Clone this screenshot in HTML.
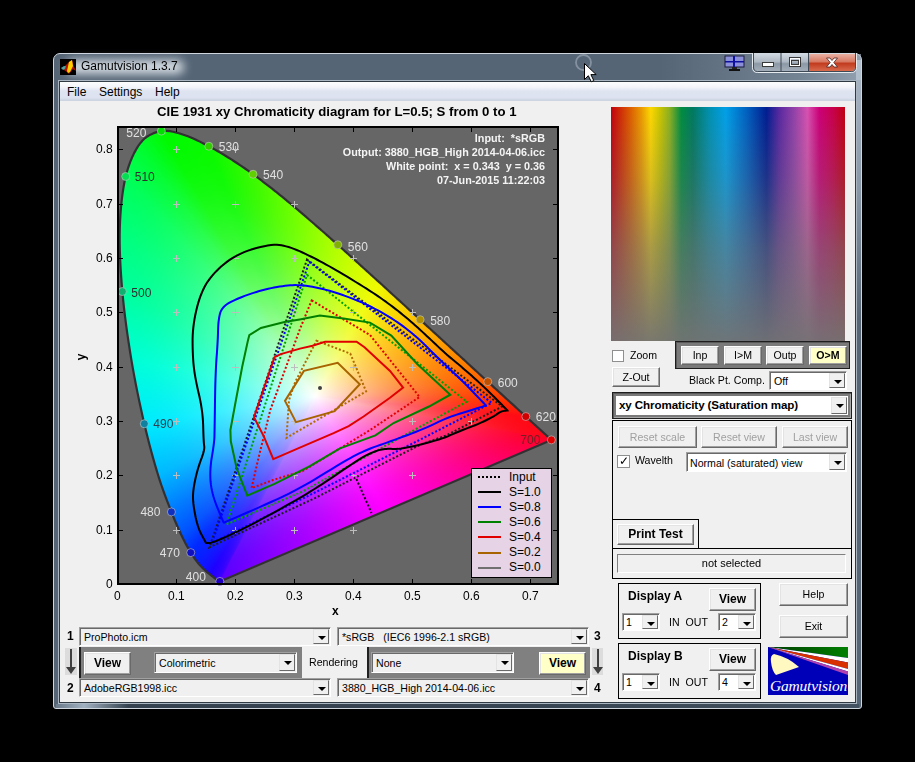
<!DOCTYPE html>
<html><head><meta charset="utf-8">
<style>
*{box-sizing:border-box}
body{margin:0;width:915px;height:762px;background:#000;position:relative;overflow:hidden;font-family:"Liberation Sans",sans-serif;}
.a{position:absolute}
#frame{left:53px;top:53px;width:809px;height:656px;background:#556576;border:1px solid #cfd6de;border-radius:7px 7px 3px 3px;}
#client{left:58px;top:80px;width:799px;height:624px;border:1px solid #a9b5c1;}
#client2{left:59px;top:81px;width:797px;height:622px;border:1px solid #2f3942;background:#f0f0f0;}
#menu{left:60px;top:82px;width:795px;height:19px;background:linear-gradient(#fdfdfe 0px,#f3f5fa 5px,#dfe4f1 9px,#dce2f0 16px,#cdd4e2 18px);}
.mi{top:85px;font-size:12px;color:#000}
.t11{font-size:10.6px}
.btn{background:#f0f0f0;border:1px solid;border-color:#fff #696969 #696969 #fff;box-shadow:inset -1px -1px 0 #a0a0a0, inset 1px 1px 0 #e3e3e3;font-size:10.6px;text-align:center;color:#000}
.dd{background:#fff;border:1px solid;border-color:#a0a0a0 #fff #fff #a0a0a0;box-shadow:inset 1px 1px 0 #696969;font-size:10.6px;}
.dda{position:absolute;right:1px;top:1px;bottom:1px;width:16px;background:#f0f0f0;border:1px solid;border-color:#e3e3e3 #696969 #696969 #e3e3e3;}
.dda:after{content:"";position:absolute;left:4px;top:6px;border-left:4px solid transparent;border-right:4px solid transparent;border-top:4px solid #000}
.lbl{font-size:12px;color:#000;white-space:nowrap}
</style></head><body>
<div id="frame" class="a"></div>
<div class="a" style="left:660px;top:54px;width:201px;height:26px;background:linear-gradient(to right,rgba(175,190,205,0) 0%,rgba(175,190,205,0.35) 70%,rgba(185,198,212,0.6) 100%)"></div>
<div class="a" style="left:856px;top:60px;width:5px;height:260px;background:linear-gradient(rgba(185,198,212,0.85) 0%,rgba(170,185,200,0.6) 50%,rgba(85,101,118,0) 100%)"></div>
<div class="a" style="left:56px;top:704px;width:803px;height:4px;background:linear-gradient(to right,rgba(120,136,152,0.6) 0%,rgba(175,190,205,0.85) 3.5%,rgba(48,60,72,0.85) 9%,rgba(48,60,72,0.8) 60%,rgba(60,74,88,0.7) 100%)"></div>
<div id="client" class="a"></div>
<div id="client2" class="a"></div>
<div id="menu" class="a"></div>
<div class="a mi" style="left:67px">File</div>
<div class="a mi" style="left:99px">Settings</div>
<div class="a mi" style="left:155px">Help</div>

<svg class="a" style="left:0;top:0" width="915" height="762">
<defs><linearGradient id="fbg" x1="0" y1="0" x2="0.4" y2="1"><stop offset="0" stop-color="#00f000"/><stop offset="0.45" stop-color="#a0ffc0"/><stop offset="0.7" stop-color="#f0c0f0"/><stop offset="1" stop-color="#8000ff"/></linearGradient></defs>
<rect x="118" y="127" width="440" height="457" fill="#666"/>
<polygon points="219.8,581.4 219.4,581.4 218.7,581.2 218.1,580.8 217.2,580.3 216.1,579.3 214.6,578.1 212.6,576.5 210.0,574.4 206.7,571.7 202.5,567.9 197.5,562.3 190.8,552.6 182.2,536.9 171.4,511.9 158.1,475.0 144.3,423.8 131.4,359.8 122.3,291.5 119.8,228.3 125.7,176.5 140.5,142.9 161.4,131.1 184.9,135.2 208.9,146.2 231.4,159.4 253.1,174.3 274.5,190.6 295.6,207.9 316.7,226.1 337.8,244.8 358.8,263.7 379.7,282.7 400.2,301.4 420.1,319.7 439.2,337.2 457.2,353.6 473.5,368.6 487.7,381.7 500.3,393.1 510.7,402.6 519.1,410.3 525.8,416.5 531.2,421.4 535.5,425.4 539.1,428.7 542.1,431.4 546.2,435.2 548.6,437.3 550.6,439.2 551.3,439.9" fill="url(#fbg)" stroke="#333" stroke-width="2"/>
<rect x="118" y="127" width="440" height="457" fill="none" stroke="#000" stroke-width="2"/>
</svg>
<canvas id="cv" class="a" width="915" height="762" style="left:0;top:0"></canvas>
<script>
(function(){
var cv=document.getElementById('cv'),c=cv.getContext('2d');
var W=915,H=762,SATP=1.8;
function X(x){return 117.5+x*590.5;}
function Y(y){return 584-y*543.2;}
var L=[[380,.1741,.0050],[400,.1733,.0048],[410,.1726,.0048],[420,.1714,.0051],[425,.1703,.0058],[430,.1689,.0069],[435,.1669,.0086],[440,.1644,.0109],[445,.1611,.0138],[450,.1566,.0177],[455,.1510,.0227],[460,.1440,.0297],[465,.1355,.0399],[470,.1241,.0578],[475,.1096,.0868],[480,.0913,.1327],[485,.0687,.2007],[490,.0454,.2950],[495,.0235,.4127],[500,.0082,.5384],[505,.0039,.6548],[510,.0139,.7502],[515,.0389,.8120],[520,.0743,.8338],[525,.1142,.8262],[530,.1547,.8059],[535,.1929,.7816],[540,.2296,.7543],[545,.2658,.7243],[550,.3016,.6923],[555,.3373,.6589],[560,.3731,.6245],[565,.4087,.5896],[570,.4441,.5547],[575,.4788,.5202],[580,.5125,.4866],[585,.5448,.4544],[590,.5752,.4242],[595,.6029,.3965],[600,.6270,.3725],[605,.6482,.3514],[610,.6658,.3340],[615,.6801,.3197],[620,.6915,.3083],[625,.7006,.2993],[630,.7079,.2920],[635,.7140,.2859],[640,.7191,.2809],[650,.7260,.2740],[660,.7300,.2700],[680,.7334,.2666],[700,.7347,.2653]];
window._L=L;
var SP=[];(function(){var P=[];for(var i=1;i<L.length;i++)P.push([X(L[i][1]),Y(L[i][2])]);
 for(var i=0;i<P.length-1;i++){var p0=P[Math.max(0,i-1)],p1=P[i],p2=P[i+1],p3=P[Math.min(P.length-1,i+2)];
  for(var s=0;s<8;s++){var t=s/8,t2=t*t,t3=t2*t;
   SP.push([0.5*((2*p1[0])+(-p0[0]+p2[0])*t+(2*p0[0]-5*p1[0]+4*p2[0]-p3[0])*t2+(-p0[0]+3*p1[0]-3*p2[0]+p3[0])*t3),
            0.5*((2*p1[1])+(-p0[1]+p2[1])*t+(2*p0[1]-5*p1[1]+4*p2[1]-p3[1])*t2+(-p0[1]+3*p1[1]-3*p2[1]+p3[1])*t3)]);}}
 SP.push(P[P.length-1]);})();
function locPath(){c.beginPath();for(var i=0;i<SP.length;i++){if(i==0)c.moveTo(SP[i][0],SP[i][1]);else c.lineTo(SP[i][0],SP[i][1]);}c.closePath();}
c.fillStyle='#666666';c.fillRect(118,127,440,457);
// clip path
c.save();
locPath();
c.clip();
function g(v){v=v<=0.0031308?12.92*v:1.055*Math.pow(v,1/2.4)-0.055;return Math.max(0,Math.min(255,Math.round(v*255)));}
var tmp=document.createElement('canvas');tmp.width=W;tmp.height=H;var tc=tmp.getContext('2d');var ti=tc.createImageData(W,H),td=ti.data;
var KC={400:[90,0,255],450:[30,0,255],470:[0,40,255],480:[0,120,255],485:[0,185,255],490:[0,235,255],495:[0,255,215],500:[0,255,160],510:[0,255,90],520:[0,250,0],530:[10,250,0],540:[60,250,0],550:[115,255,0],560:[180,255,0],570:[240,250,0],580:[255,190,0],590:[255,140,0],600:[255,95,0],610:[255,45,0],620:[255,10,20],700:[255,0,40]};
var KW=[400,450,470,480,485,490,495,500,510,520,530,540,550,560,570,580,590,600,610,620,700];
function lc(wl){if(wl<=400)return KC[400];for(var i=0;i<KW.length-1;i++){if(wl<=KW[i+1]){var a=KW[i],b=KW[i+1],t=(wl-a)/(b-a),A=KC[a],B=KC[b];return [A[0]+(B[0]-A[0])*t,A[1]+(B[1]-A[1])*t,A[2]+(B[2]-A[2])*t];}}return KC[700];}
// boundary vertices with colors
var BV=[];
for(var i=1;i<L.length;i++){BV.push([L[i][1],L[i][2],lc(L[i][0])]);}
var PK=[[0,[255,0,40]],[0.25,[255,0,150]],[0.5,[255,0,255]],[0.75,[165,0,255]],[1,[90,0,255]]];
var p7=L[L.length-1],p4=L[1];
for(var j=1;j<20;j++){var t=j/20;var col;for(var k=0;k<PK.length-1;k++){if(t<=PK[k+1][0]){var u=(t-PK[k][0])/(PK[k+1][0]-PK[k][0]);col=[0,1,2].map(function(q){return PK[k][1][q]+(PK[k+1][1][q]-PK[k][1][q])*u;});break;}}
 BV.push([p7[1]+(p4[1]-p7[1])*t,p7[2]+(p4[2]-p7[2])*t,col]);}
var WX=0.335,WY=0.345,NA=2880,RA=new Float32Array(NA),CA=[];
// for each angle find intersection
for(var a=0;a<NA;a++){var th=a/NA*2*Math.PI,dx=Math.cos(th),dy=Math.sin(th);RA[a]=0;CA[a]=[255,255,255];
 for(var i=0;i<BV.length;i++){var P=BV[i],Q=BV[(i+1)%BV.length];
  var ex=Q[0]-P[0],ey=Q[1]-P[1],fx=P[0]-WX,fy=P[1]-WY;var den=dx*ey-dy*ex;if(Math.abs(den)<1e-12)continue;
  var r=(fx*ey-fy*ex)/den,s=(fx*dy-fy*dx)/den;if(r>0&&s>=0&&s<=1){RA[a]=r;CA[a]=[0,1,2].map(function(q){return P[2][q]+(Q[2][q]-P[2][q])*s;});break;}}}
for(var py=127;py<585;py++){for(var px=117;px<559;px++){
 var x=(px+0.5-117.5)/590.5,y=(584-(py+0.5))/543.2;
 var dx=x-WX,dy=y-WY,rr=Math.sqrt(dx*dx+dy*dy),th=Math.atan2(dy,dx);if(th<0)th+=2*Math.PI;
 var ai=Math.floor(th/(2*Math.PI)*NA)%NA;var R=RA[ai]||1;var sat=Math.min(1,rr/R);sat=1-Math.pow(1-sat,SATP);
 var C=CA[ai];
 var k=(py*W+px)*4;td[k]=255+(C[0]-255)*sat;td[k+1]=255+(C[1]-255)*sat;td[k+2]=255+(C[2]-255)*sat;td[k+3]=255;
}}
tc.putImageData(ti,0,0);
c.drawImage(tmp,0,0);
c.restore();
// locus outline
c.strokeStyle='#333033';c.lineWidth=2.2;c.lineJoin='round';
locPath();c.stroke();
// grid plus marks
var G=[[1,8],[2,8],[1,7],[2,7],[3,7],[1,6],[2,6],[3,6],[4,6],[1,5],[2,5],[3,5],[4,5],[5,5],[1,4],[2,4],[3,4],[4,4],[5,4],[1,3],[2,3],[3,3],[4,3],[5,3],[6,3],[1,2],[2,2],[3,2],[4,2],[5,2],[1,1],[2,1],[3,1],[4,1]];
c.strokeStyle='#bdbdbd';c.lineWidth=1;
G.forEach(function(q){var px=Math.floor(X(q[0]/10))+0.5,py=Math.round(Y(q[1]/10))+0.5;c.beginPath();c.moveTo(px-3.5,py);c.lineTo(px+3.5,py);c.moveTo(px,py-3.5);c.lineTo(px,py+3.5);c.stroke();});
function spl(P){for(var it=0;it<3;it++){var R=[],n=P.length;for(var i=0;i<n;i++){var a=P[i],b=P[(i+1)%n];
 if(a[0]==b[0]&&a[1]==b[1]){R.push(a);continue;}
 R.push([0.75*a[0]+0.25*b[0],0.75*a[1]+0.25*b[1]]);R.push([0.25*a[0]+0.75*b[0],0.25*a[1]+0.75*b[1]]);}P=R;}return P;}
function pl(pts,col,dot,close){c.beginPath();c.strokeStyle=col;c.lineWidth=2;c.lineJoin='miter';
 if(dot)c.setLineDash([2,2]);else c.setLineDash([]);
 for(var i=0;i<pts.length;i++){if(i==0)c.moveTo(pts[i][0],pts[i][1]);else c.lineTo(pts[i][0],pts[i][1]);}
 if(close)c.closePath();c.stroke();}
// dotted input triangles
pl([[307,259.5],[502.3,406.5],[446.3,435.4],[420,444.9],[387.2,461.4],[315,498.1],[209.4,547.3],[238.3,462.6]],'#202020',1,1);
pl([[356.4,479],[371.5,513]],'#101010',1,0);
pl([[309.3,261.9],[491.7,402.9],[420,439.7],[305.2,497.4],[212.1,542.7]],'#0000ff',1,1);
pl([[307,274.9],[466.9,401.7],[418,427.9],[302.6,491.5],[226.5,524.3]],'#00a000',1,1);
pl([[311.7,300.4],[370,335],[419.6,397],[370,430.1],[302.6,471.1],[273.8,479.7],[251.5,488.2],[258,460],[270.3,410],[300,328.9]],'#e00000',1,1);
pl([[316.5,340.7],[350.3,353.6],[366.1,391.4],[286.5,437.9],[289,400],[295.2,382]],'#b06a00',1,1);
// solid output
pl(spl([[206,542.9],[206,542.9],[206,542.9],[213.1,542.9],[250.9,525.2],[298.1,499.2],[326.5,481.5],[358.9,459.1],[375.4,450.8],[387.2,448.4],[399.1,449.6],[439.4,440],[459.8,431],[478.7,424],[494.5,416],[500.8,411.3],[507.5,410.5],[507.5,410.5],[507.5,410.5],[488.2,390.9],[467.7,372],[445.7,353.9],[428.3,337.3],[409.4,320],[388.9,303.7],[370,290.7],[336.5,270.2],[312.8,257.2],[289.2,246.5],[271.5,243.7],[237.2,253.6],[213.6,272.5],[200.6,292.6],[192.6,325.7],[192.6,355.7],[195,377.7],[202.8,410.8],[203.6,442.5],[204.8,449.6],[197.7,468.5],[193,489.8],[193,503.9],[197.7,527.6]]),'#000000',0,1);
pl(spl([[223.7,522.8],[223.7,522.8],[223.7,522.8],[250.9,511],[298.1,489.8],[340,463.8],[363.6,450.8],[387.2,442.5],[422.7,429.5],[447.2,417.6],[467.7,411.3],[486,405.5],[486,405.5],[486,405.5],[463,381.4],[441,361],[415.7,335.7],[393.6,319.1],[370,306],[355.4,299.7],[331.7,290.9],[303.4,284.8],[284.5,285.5],[260.9,290.2],[237.2,298.5],[221.9,306.8],[218.3,319.8],[217.8,341.5],[215.4,373],[214.6,430],[214.3,442.5],[209.5,470.9],[211.9,494.5]]),'#0000ff',0,1);
pl([[247.3,495.7],[274.5,483.9],[309.9,466.1],[340,448.4],[375.4,435.4],[393.6,423],[429,406.5],[450.3,394.7],[417.2,364],[391.3,335.6],[370,322.6],[343.6,318.6],[319.9,315.5],[299.7,319.4],[284.5,322.1],[260.9,328],[249.3,335.2],[247.7,341.5],[242.2,366.7],[235.1,404.5],[230.4,430],[230.8,441.3],[236.7,468.5]],'#008000',0,1);
pl([[273.3,459.1],[298.1,448.4],[333.6,433.1],[348.7,426.1],[363.6,416.5],[390,397.7],[403.1,387.6],[390,370.9],[364.5,347.3],[356.6,341.8],[325.1,341.8],[312.5,345.7],[300,348.6],[280.8,354.1],[274.5,357.2],[254,417.1],[263.9,436.6]],'#e00000',0,1);
pl([[285,400.9],[303.9,370.9],[337.7,362.8],[359.8,384.3],[334.6,411.1],[296,422.1]],'#a86400',0,1);
c.setLineDash([]);
// white point
c.fillStyle='#404040';c.beginPath();c.arc(320,388,2,0,7);c.fill();
// wavelength markers
var M=[[520,'#00e000','#e0e0e0',-35,6],[530,'#30d000','#e0e0e0',10,5],[540,'#60d000','#e0e0e0',10,5],[560,'#80b000','#e0e0e0',10,6],[580,'#b09000','#e0e0e0',10,5],[600,'#c05000','#e0e0e0',10,5],[620,'#d00000','#e0e0e0',10,4],[700,'#e00000','#702020',-31,4],[510,'#00e050','#303030',9,5],[500,'#10b070','#303030',9,5],[490,'#1080a0','#304050',9,4],[480,'#1030c0','#e0e0e0',-31,4],[470,'#1010c0','#e0e0e0',-31,4],[400,'#2000c0','#e0e0e0',-34,0]];
c.font='12px "Liberation Sans"';c.textBaseline='alphabetic';
M.forEach(function(m){var p=null;L.forEach(function(q){if(q[0]==m[0])p=q;});var px=X(p[1]),py=Y(p[2]);
 c.beginPath();c.arc(px,py,4,0,7);c.fillStyle=m[1];c.fill();c.strokeStyle='rgba(200,200,200,0.6)';c.lineWidth=1;c.stroke();
 c.fillStyle=m[2];c.fillText(String(m[0]),px+m[3],py+m[4]);});
// axes box
c.strokeStyle='#000';c.lineWidth=2;c.strokeRect(118,127,440,457);
c.lineWidth=1;c.beginPath();
for(var i=1;i<=7;i++){var px=Math.floor(X(i/10))+0.5;c.moveTo(px,584);c.lineTo(px,579);c.moveTo(px,127);c.lineTo(px,132);}
for(var i=1;i<=8;i++){var py=Math.round(Y(i/10))+0.5;c.moveTo(118,py);c.lineTo(123,py);c.moveTo(558,py);c.lineTo(553,py);}
c.stroke();
})();
</script>

<div class="a" style="left:157px;top:104px;font-size:13.2px;font-weight:bold;white-space:nowrap">CIE 1931 xy Chromaticity diagram for L=0.5; S from 0 to 1</div>
<div class="a lbl" style="left:96px;top:142px">0.8</div>
<div class="a lbl" style="left:96px;top:197px">0.7</div>
<div class="a lbl" style="left:96px;top:251px">0.6</div>
<div class="a lbl" style="left:96px;top:305px">0.5</div>
<div class="a lbl" style="left:96px;top:360px">0.4</div>
<div class="a lbl" style="left:96px;top:414px">0.3</div>
<div class="a lbl" style="left:96px;top:468px">0.2</div>
<div class="a lbl" style="left:96px;top:523px">0.1</div>
<div class="a lbl" style="left:106px;top:577px">0</div>
<div class="a lbl" style="left:114px;top:589px">0</div>
<div class="a lbl" style="left:168px;top:589px">0.1</div>
<div class="a lbl" style="left:227px;top:589px">0.2</div>
<div class="a lbl" style="left:286px;top:589px">0.3</div>
<div class="a lbl" style="left:345px;top:589px">0.4</div>
<div class="a lbl" style="left:404px;top:589px">0.5</div>
<div class="a lbl" style="left:463px;top:589px">0.6</div>
<div class="a lbl" style="left:522px;top:589px">0.7</div>
<div class="a lbl" style="left:332px;top:604px;font-weight:bold">x</div>
<div class="a lbl" style="left:78px;top:350px;font-weight:bold;transform:rotate(-90deg)">y</div>
<div class="a" style="right:370px;top:131px;font-size:10.8px;font-weight:bold;color:#f4f4f4;text-align:right;line-height:14px;white-space:nowrap">Input:&nbsp; *sRGB<br>Output: 3880_HGB_High 2014-04-06.icc<br>White point:&nbsp; x = 0.343&nbsp; y = 0.36<br>07-Jun-2015 11:22:03</div>
<div class="a" style="left:471px;top:468px;width:81px;height:110px;background:#e6d4e6;border:1px solid #000"></div>
<svg class="a" style="left:471px;top:468px" width="81" height="110">
<line x1="7" y1="9" x2="30" y2="9" stroke="#000" stroke-width="2" stroke-dasharray="2 2"/>
<line x1="7" y1="24" x2="30" y2="24" stroke="#000" stroke-width="2"/>
<line x1="7" y1="39" x2="30" y2="39" stroke="#0000ff" stroke-width="2"/>
<line x1="7" y1="54" x2="30" y2="54" stroke="#008000" stroke-width="2"/>
<line x1="7" y1="69" x2="30" y2="69" stroke="#e00000" stroke-width="2"/>
<line x1="7" y1="85" x2="30" y2="85" stroke="#a86400" stroke-width="2"/>
<line x1="7" y1="100" x2="30" y2="100" stroke="#707070" stroke-width="2"/>
</svg>
<div class="a lbl" style="left:509px;top:470px;line-height:15px">Input<br>S=1.0<br>S=0.8<br>S=0.6<br>S=0.4<br>S=0.2<br>S=0.0</div>

<!-- title bar -->
<div class="a" style="left:66px;top:60px;width:118px;height:14px;border-radius:7px;background:rgba(225,231,237,0.92);filter:blur(5px)"></div>
<svg class="a" style="left:60px;top:59px" width="16" height="16" viewBox="0 0 16 16">
<rect width="16" height="16" fill="#000"/>
<path d="M1 9 L5 7 L9 3 L12 1 L14 8 L16 12 L13 10 L9 15 L7 13 L4 11 Z" fill="#b01000"/>
<path d="M9 3 L12 1 L13 7 L10 13 L8 14 L7 12 Z" fill="#ffd000"/>
<path d="M1 9 L4 7 L6 7 L5 10 L3 11 Z" fill="#30a0a0"/>
<path d="M2 9 L4 8 L5 9 L3 10 Z" fill="#909090"/>
</svg>
<div class="a" style="left:81px;top:59px;font-size:12px;color:#000;white-space:nowrap">Gamutvision 1.3.7</div>
<svg class="a" style="left:724px;top:55px" width="21" height="17" viewBox="0 0 21 17">
<rect x="1" y="1" width="19" height="11" fill="#8a8fd8" stroke="#1a1a40" stroke-width="1"/>
<rect x="9" y="1" width="2" height="11" fill="#1010a0"/>
<rect x="1" y="6" width="19" height="1.5" fill="#1010a0"/>
<rect x="8" y="12" width="5" height="2" fill="#222"/>
<rect x="5" y="14" width="11" height="2" fill="#111"/>
</svg>
<svg class="a" style="left:752px;top:53px" width="105" height="20" viewBox="0 0 105 20">
<defs>
<linearGradient id="gb" x1="0" y1="0" x2="0" y2="1"><stop offset="0" stop-color="#d4dbe3"/><stop offset="0.45" stop-color="#aeb8c3"/><stop offset="0.55" stop-color="#8c98a5"/><stop offset="1" stop-color="#a7b2bd"/></linearGradient>
<linearGradient id="gr" x1="0" y1="0" x2="0" y2="1"><stop offset="0" stop-color="#eab0a2"/><stop offset="0.45" stop-color="#d77a63"/><stop offset="0.55" stop-color="#c23b1f"/><stop offset="1" stop-color="#d86a4c"/></linearGradient>
</defs>
<path d="M0.5 0 V14.5 Q0.5 19.5 5.5 19.5 H99.5 Q104.5 19.5 104.5 14.5 V0" fill="url(#gb)" stroke="#e6ebf0" stroke-width="1"/>
<path d="M1.5 0 V14 Q1.5 18.5 5.5 18.5 H99.5 Q103.5 18.5 103.5 14 V0" fill="none" stroke="#3d4955" stroke-width="1"/>
<path d="M57 1 H103 V14 Q103 18 99 18 H57 Z" fill="url(#gr)"/>
<line x1="29" y1="0" x2="29" y2="19" stroke="#3d4955"/>
<line x1="56.5" y1="0" x2="56.5" y2="19" stroke="#3d4955"/>
<rect x="10.5" y="9.5" width="11" height="4" fill="#fff" stroke="#3a3a3a"/>
<rect x="37.5" y="4.5" width="11" height="9" fill="none" stroke="#3a3a3a" stroke-width="1"/>
<rect x="38.5" y="5.5" width="9" height="7" fill="none" stroke="#fff" stroke-width="1"/>
<rect x="39.5" y="7.5" width="7" height="4" fill="none" stroke="#3a3a3a" stroke-width="1"/>
<path d="M74.5 5 L78 5 L80 7.5 L82 5 L85.5 5 L81.8 9.5 L85.5 14 L82 14 L80 11.5 L78 14 L74.5 14 L78.2 9.5 Z" fill="#fff" stroke="#4a2020" stroke-width="0.8"/>
</svg>
<svg class="a" style="left:573px;top:52px" width="30" height="32" viewBox="0 0 30 32">
<circle cx="10.5" cy="10.5" r="7.5" fill="none" stroke="#8d9aa8" stroke-width="1.8" opacity="0.85"/>
<path d="M11.5 11.5 L11.5 27.5 L15.3 23.7 L18.3 29.8 L20.8 28.6 L17.9 22.6 L23.2 22.6 Z" fill="#fff" stroke="#000" stroke-width="1" stroke-linejoin="miter"/>
</svg>
<!-- right panel -->
<div id="spec" class="a" style="left:611px;top:107px;width:234px;height:234px;background:linear-gradient(to right,#c00010 0%,#cc2008 3%,#dc5a00 8%,#eb9a00 13%,#ffd800 17%,#c8c400 21%,#8cb020 25%,#008c40 30%,#007860 35%,#0090b0 42%,#00a0e8 49%,#0060c0 58%,#001c90 66.5%,#5a28a0 72%,#9040a8 78%,#d850b0 84%,#cc0078 89%,#c8004a 95%,#c00010 100%)"></div>
<div class="a" style="left:611px;top:107px;width:234px;height:234px;background:linear-gradient(rgba(115,115,115,0) 0%,rgba(115,115,115,0.25) 30%,rgba(115,115,115,0.6) 60%,rgba(115,115,115,0.95) 100%)"></div>
<div class="a" style="left:612px;top:350px;width:12px;height:12px;background:#fff;border:1px solid #8e8f8f"></div>
<div class="a t11" style="left:630px;top:349px">Zoom</div>
<div class="a btn" style="left:612px;top:367px;width:48px;height:20px;line-height:18px">Z-Out</div>
<div class="a" style="left:675px;top:341px;width:175px;height:28px;background:#7a7a7a;border:1px solid #1e1e1e;box-shadow:inset 1px 1px 0 #5a5a5a"></div>
<div class="a btn" style="left:681px;top:346px;width:38px;height:19px;line-height:17px">Inp</div>
<div class="a btn" style="left:724px;top:346px;width:38px;height:19px;line-height:17px">I&gt;M</div>
<div class="a btn" style="left:766px;top:346px;width:38px;height:19px;line-height:17px">Outp</div>
<div class="a btn" style="left:809px;top:346px;width:38px;height:19px;line-height:17px;background:#ffffc8;font-weight:bold">O&gt;M</div>
<div class="a t11" style="left:689px;top:374px">Black Pt. Comp.</div>
<div class="a dd" style="left:769px;top:371px;width:78px;height:19px;padding:2px 4px;line-height:14px">Off<div class="dda"></div></div>
<div class="a" style="left:612px;top:392px;width:240px;height:27px;background:#7a7a7a;border:1px solid #1e1e1e;box-shadow:inset 1px 1px 0 #5a5a5a,inset -1px -1px 0 #a8a8a8"></div>
<div class="a dd" style="left:616px;top:396px;width:232px;height:19px;padding:2px 3px;line-height:14px;font-weight:bold;font-size:11.6px;border:none;box-shadow:none;letter-spacing:-0.1px">xy Chromaticity (Saturation map)<div class="dda"></div></div>
<div class="a" style="left:612px;top:420px;width:240px;height:159px;border:1px solid #000"></div>
<div class="a btn" style="left:618px;top:426px;width:79px;height:22px;line-height:20px;color:#a0a0a0">Reset scale</div>
<div class="a btn" style="left:701px;top:426px;width:76px;height:22px;line-height:20px;color:#a0a0a0">Reset view</div>
<div class="a btn" style="left:782px;top:426px;width:66px;height:22px;line-height:20px;color:#a0a0a0">Last view</div>
<div class="a" style="left:617px;top:455px;width:13px;height:13px;background:#fff;border:1px solid #8e8f8f;font-size:12px;line-height:11px;text-align:center">&#10003;</div>
<div class="a t11" style="left:635px;top:454px">Wavelth</div>
<div class="a dd" style="left:686px;top:452px;width:161px;height:20px;padding:3px 3px;line-height:14px">Normal (saturated) view<div class="dda"></div></div>
<div class="a" style="left:612px;top:519px;width:87px;height:30px;border:1px solid #000;border-bottom:none"></div>
<div class="a" style="left:612px;top:548px;width:240px;height:1px;background:#000"></div>
<div class="a btn" style="left:617px;top:524px;width:77px;height:21px;line-height:19px;font-weight:bold;font-size:12px">Print Test</div>
<div class="a" style="left:617px;top:554px;width:229px;height:19px;border:1px solid;border-color:#808080 #fff #fff #808080;font-size:11px;text-align:center;line-height:17px">not selected</div>
<div class="a" style="left:618px;top:583px;width:143px;height:56px;border:1px solid #000"></div>
<div class="a" style="left:628px;top:589px;font-size:12px;font-weight:bold">Display A</div>
<div class="a btn" style="left:709px;top:588px;width:47px;height:23px;line-height:21px;font-weight:bold;font-size:12px">View</div>
<div class="a dd" style="left:622px;top:613px;width:38px;height:18px;padding:2px 3px;line-height:13px">1<div class="dda"></div></div>
<div class="a t11" style="left:669px;top:616px;word-spacing:3px">IN OUT</div>
<div class="a dd" style="left:718px;top:613px;width:38px;height:18px;padding:2px 3px;line-height:13px">2<div class="dda"></div></div>
<div class="a" style="left:618px;top:643px;width:143px;height:56px;border:1px solid #000"></div>
<div class="a" style="left:628px;top:649px;font-size:12px;font-weight:bold">Display B</div>
<div class="a btn" style="left:709px;top:648px;width:47px;height:23px;line-height:21px;font-weight:bold;font-size:12px">View</div>
<div class="a dd" style="left:622px;top:673px;width:38px;height:18px;padding:2px 3px;line-height:13px">1<div class="dda"></div></div>
<div class="a t11" style="left:669px;top:676px;word-spacing:3px">IN OUT</div>
<div class="a dd" style="left:718px;top:673px;width:38px;height:18px;padding:2px 3px;line-height:13px">4<div class="dda"></div></div>
<div class="a btn" style="left:779px;top:583px;width:69px;height:23px;line-height:21px">Help</div>
<div class="a btn" style="left:779px;top:615px;width:69px;height:23px;line-height:21px">Exit</div>
<svg class="a" style="left:768px;top:647px" width="80" height="48" viewBox="0 0 80 48">
<defs><linearGradient id="lg" x1="0" y1="0" x2="1" y2="0"><stop offset="0" stop-color="#003c00"/><stop offset="1" stop-color="#008000"/></linearGradient></defs>
<rect width="80" height="48" fill="#0000b8"/>
<path d="M0 0 L80 0 L80 11 Z" fill="url(#lg)"/>
<path d="M0 0 L80 11 L80 15.5 Z" fill="#fff"/>
<path d="M0 0 L80 15.5 L80 22 Z" fill="#d83000"/>
<path d="M0 0 L80 22 L80 24.5 Z" fill="#fff"/>
<path d="M0 0 L80 24.5 L80 28 Z" fill="#b040b0"/>
<path d="M6 7 Q2 8 3 15 Q4 24 8 28 L31 20 Q20 10 6 7 Z" fill="#fff8c0"/>
<text x="40.5" y="44" font-family="Liberation Serif" font-style="italic" font-size="15.5" fill="#fff" text-anchor="middle" letter-spacing="-0.2">Gamutvision</text>
</svg>
<!-- bottom controls -->
<div class="a lbl" style="left:67px;top:629px;font-weight:bold">1</div>
<div class="a dd" style="left:79px;top:627px;width:252px;height:19px;padding:2px 4px;line-height:14px;background:#f0f0f0">ProPhoto.icm<div class="dda"></div></div>
<div class="a dd" style="left:337px;top:627px;width:252px;height:19px;padding:2px 4px;line-height:14px;background:#f0f0f0">*sRGB &nbsp; (IEC6 1996-2.1 sRGB)<div class="dda"></div></div>
<div class="a lbl" style="left:594px;top:629px;font-weight:bold">3</div>
<div class="a" style="left:79px;top:647px;width:223px;height:31px;background:#808080;border-left:2px solid #202020"></div>
<div class="a" style="left:367px;top:647px;width:223px;height:31px;background:#808080;border-left:2px solid #202020"></div>
<div class="a btn" style="left:84px;top:652px;width:47px;height:23px;line-height:21px;font-weight:bold;font-size:12px">View</div>
<div class="a dd" style="left:154px;top:652px;width:143px;height:21px;padding:3px 4px;line-height:14px;background:#f0f0f0">Colorimetric<div class="dda"></div></div>
<div class="a t11" style="left:309px;top:656px">Rendering</div>
<div class="a dd" style="left:371px;top:652px;width:143px;height:21px;padding:3px 4px;line-height:14px;background:#f0f0f0">None<div class="dda"></div></div>
<div class="a btn" style="left:539px;top:652px;width:47px;height:23px;line-height:21px;font-weight:bold;font-size:12px;background:#ffffc8">View</div>
<div class="a lbl" style="left:67px;top:681px;font-weight:bold">2</div>
<div class="a dd" style="left:79px;top:678px;width:252px;height:19px;padding:2px 4px;line-height:14px;background:#f0f0f0">AdobeRGB1998.icc<div class="dda"></div></div>
<div class="a dd" style="left:337px;top:678px;width:252px;height:19px;padding:2px 4px;line-height:14px;background:#f0f0f0">3880_HGB_High 2014-04-06.icc<div class="dda"></div></div>
<div class="a lbl" style="left:594px;top:681px;font-weight:bold">4</div>
<div class="a" style="left:65px;top:648px;width:12px;height:27px;background:#dcdcdc"></div>
<div class="a" style="left:592px;top:648px;width:11px;height:27px;background:#dcdcdc"></div>
<svg class="a" style="left:65px;top:648px" width="12" height="27"><path d="M5 1 H7 V19 H11 L6 26 L1 19 H5 Z" fill="#404040"/></svg>
<svg class="a" style="left:592px;top:648px" width="12" height="27"><path d="M5 1 H7 V19 H11 L6 26 L1 19 H5 Z" fill="#404040"/></svg>
</body></html>
